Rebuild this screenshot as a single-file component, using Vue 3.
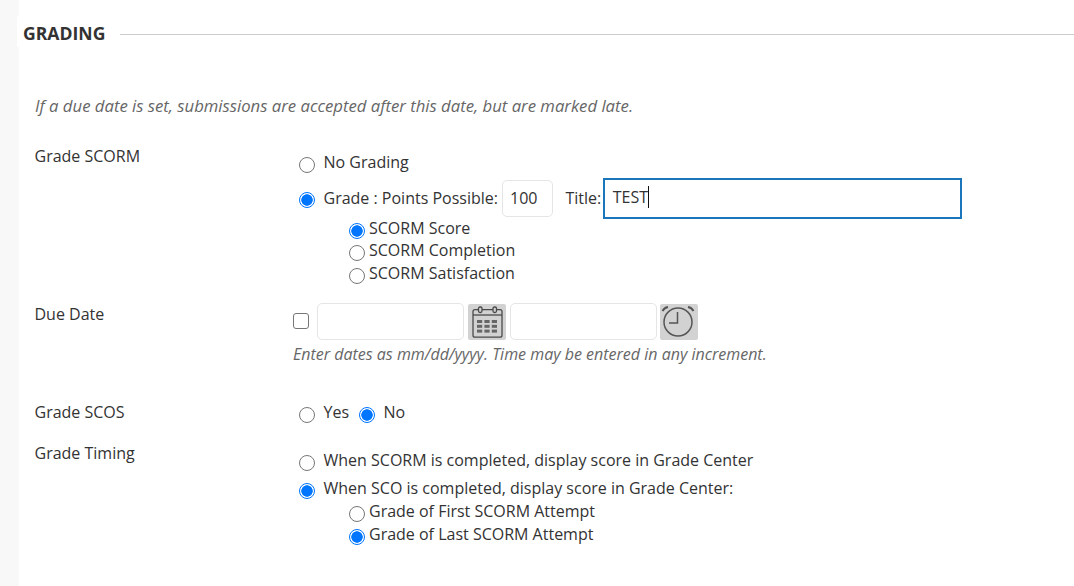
<script setup>
const scormOptions = [
  { text: 'SCORM Score', on: true },
  { text: 'SCORM Completion', on: false },
  { text: 'SCORM Satisfaction', on: false }
]
const attemptOptions = [
  { text: 'Grade of First SCORM Attempt', on: false },
  { text: 'Grade of Last SCORM Attempt', on: true }
]
const calendarCells = [0, 1, 2, 3, 4, 5, 6, 7, 8]
</script>

<template>
  <div class="page">
    <div class="strip"></div>
    <main class="main">
      <div class="heading">
        <h2>GRADING</h2>
        <div class="rule"></div>
      </div>

      <p class="hint intro">If a due date is set, submissions are accepted after this date, but are marked late.</p>

      <section class="row row-scorm">
        <div class="label">Grade SCORM</div>
        <div class="field">
          <label class="opt opt-nograde"><i class="radio"></i>No Grading</label>
          <div class="opt opt-points">
            <i class="radio on"></i>
            <span class="nudge">Grade : Points Possible:</span>
            <input class="box points" value="100">
            <span class="title-label nudge">Title:</span>
            <div class="title-box"><span class="caret">TEST</span></div>
          </div>
          <div class="sub sub-scorm">
            <label v-for="o in scormOptions" :key="o.text" class="sub-opt">
              <i class="radio" :class="{ on: o.on }"></i>{{ o.text }}
            </label>
          </div>
        </div>
      </section>

      <section class="row row-due">
        <div class="label">Due Date</div>
        <div class="field">
          <div class="date-line">
            <i class="check"></i>
            <input class="box date">
            <button class="pick">
              <svg width="38" height="36" viewBox="0 0 38 36" fill="none" stroke="#4a4a4a" stroke-width="1.3">
                <rect x="5" y="5.700" width="29" height="27.500" rx="2" />
                <line x1="5" y1="11" x2="34" y2="11" />
                <rect x="10.500" y="3" width="3.500" height="5.500" rx="1.500" fill="#d2d2d2" />
                <rect x="25" y="3" width="3.500" height="5.500" rx="1.500" fill="#d2d2d2" />
                <rect v-for="n in calendarCells" :key="n" :x="9 + (n % 3) * 7.4" :y="16 + Math.floor(n / 3) * 4.8" width="5.200" height="3" fill="#666" stroke="none" />
              </svg>
            </button>
            <input class="box date">
            <button class="pick clock">
              <svg width="38" height="36" viewBox="0 0 38 36" fill="none" stroke="#555" stroke-width="1.500">
                <circle cx="18" cy="18" r="14" />
                <path d="M17.500 8V19H9" />
                <path d="M2.500 7C3.500 5 5.500 3.500 8 3M33.500 7C32.500 5 30.500 3.500 28 3" stroke-width="2" />
              </svg>
            </button>
          </div>
          <p class="hint date-hint">Enter dates as mm/dd/yyyy. Time may be entered in any increment.</p>
        </div>
      </section>

      <section class="row row-scos">
        <div class="label">Grade SCOS</div>
        <div class="field yes-no">
          <label class="opt"><i class="radio"></i>Yes</label>
          <label class="opt opt-no"><i class="radio on"></i>No</label>
        </div>
      </section>

      <section class="row row-timing">
        <div class="label">Grade Timing</div>
        <div class="field">
          <label class="opt opt-when"><i class="radio"></i>When SCORM is completed, display score in Grade Center</label>
          <label class="opt opt-when2"><i class="radio on"></i>When SCO is completed, display score in Grade Center:</label>
          <div class="sub sub-attempt">
            <label v-for="o in attemptOptions" :key="o.text" class="sub-opt">
              <i class="radio" :class="{ on: o.on }"></i>{{ o.text }}
            </label>
          </div>
        </div>
      </section>
    </main>
  </div>
</template>

<style>
html, body {
  margin: 0;
  background: #fff;
}
</style>

<style scoped>
.page {
  display: flex;
  width: 1074px;
  height: 586px;
  overflow: hidden;
  font-family: "Open Sans", "Liberation Sans", sans-serif;
  font-size: 16px;
  line-height: 22px;
  color: #333;
}

.strip {
  width: 19px;
  flex-shrink: 0;
  background: #f8f8f8;
}

.main {
  flex: 1;
  min-width: 0;
}

.heading {
  box-sizing: border-box;
  display: flex;
  align-items: center;
  height: 31px;
  margin: 16px 0 0 -2px;
  padding: 3px 0 0 6px;
  background: #fff;
}

h2 {
  margin: 0;
  font-size: 17.600px;
  font-weight: 700;
  color: #333;
}

.rule {
  flex: 1;
  height: 1px;
  margin: 2px 0 0 15px;
  background: #cdcdcd;
}

.hint {
  margin: 0;
  font-style: italic;
  color: #666;
}

.intro {
  margin-top: 48px;
  padding-left: 16px;
  font-size: 16.720px;
}

.row {
  display: grid;
  grid-template-columns: 264.500px 1fr;
  padding-left: 15.500px;
}

.row-scorm {
  margin-top: 28px;
}

.label {
  color: #333;
}

.field {
  min-width: 0;
}

.opt {
  display: flex;
  align-items: center;
}

.radio {
  box-sizing: border-box;
  display: block;
  flex-shrink: 0;
  width: 16px;
  height: 16px;
  border: 1px solid #767676;
  border-radius: 50%;
  background: #fff;
}

.radio.on {
  border: 1px solid #0075ff;
  background: radial-gradient(circle, #0075ff 0, #0075ff 5.400px, #fff 6px);
}

.opt > .radio {
  margin-right: 8.500px;
  position: relative;
  top: 3px;
}

.opt-points > .radio {
  top: 1px;
}

.opt-nograde {
  margin-top: 6px;
}

.opt-points {
  height: 41px;
  margin-top: 5px;
}

.nudge {
  position: relative;
  top: -1px;
}

.box {
  box-sizing: border-box;
  height: 37px;
  border: 1px solid #e5e5e5;
  border-radius: 5px;
  background: #fff;
  color: #333;
  font: inherit;
  outline: none;
}

.points {
  width: 51px;
  margin-left: 4px;
  padding: 0 7px 2px;
}

.title-label {
  margin-left: 12.500px;
}

.title-box {
  box-sizing: border-box;
  display: flex;
  align-items: center;
  width: 359px;
  height: 41px;
  margin-left: 1.500px;
  padding: 0 0 3px 8px;
  border: 2px solid #1b75bb;
  color: #333;
}

.caret {
  height: 22px;
  border-right: 1px solid #111;
}

.sub {
  display: flex;
  flex-direction: column;
  padding-left: 50px;
}

.sub-scorm {
  margin-top: -2.300px;
}

.sub-opt {
  display: flex;
  align-items: center;
  height: 22.500px;
}

.sub-opt > .radio {
  margin-right: 4px;
  position: relative;
  top: 3px;
}

.row-due {
  margin-top: 18.300px;
}

.date-line {
  display: flex;
  align-items: center;
  margin-left: -6px;
}

.check {
  box-sizing: border-box;
  display: block;
  width: 16px;
  height: 16px;
  margin-right: 8px;
  border: 1px solid #767676;
  border-radius: 3px;
}

.date {
  width: 147px;
}

.pick {
  display: flex;
  align-items: center;
  justify-content: center;
  width: 38px;
  height: 36px;
  margin: 1px 4px 0;
  padding: 0;
  border: none;
  border-radius: 2px;
  background: #d2d2d2;
}

.pick.clock {
  margin-right: 0;
  margin-left: 3px;
}

.date-hint {
  margin-top: 3px;
  margin-left: -6px;
}

.row-scos {
  margin-top: 36px;
}

.yes-no {
  display: flex;
}

.opt-no {
  margin-left: 10px;
}

.row-timing {
  margin-top: 19px;
}

.opt-when {
  margin-top: 7px;
}

.opt-when2 {
  margin-top: 6px;
}

.sub-attempt {
  margin-top: 1.300px;
}
</style>
